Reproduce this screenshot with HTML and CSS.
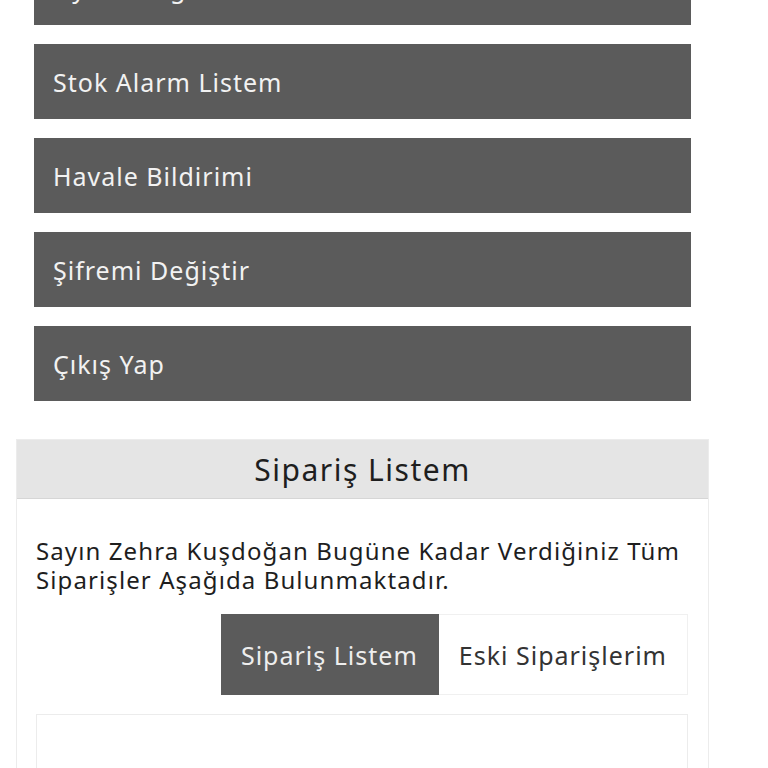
FILE: index.html
```html
<!DOCTYPE html>
<html lang="tr">
<head>
    <meta charset="UTF-8">
    <meta name="viewport" content="width=device-width, initial-scale=1.0">
    <title>Hesabım</title>
    <link rel="stylesheet" href="styles.css">
</head>
<body>
    <div class="page">
        <ul class="account-menu">
            <li><a href="#">Üyelik Bilgilerim</a></li>
            <li><a href="#">Stok Alarm Listem</a></li>
            <li><a href="#">Havale Bildirimi</a></li>
            <li><a href="#">Şifremi Değiştir</a></li>
            <li><a href="#">Çıkış Yap</a></li>
        </ul>

        <div class="orders-panel">
            <div class="orders-title">Sipariş Listem</div>
            <div class="orders-body">
                <p class="orders-info">Sayın Zehra Kuşdoğan Bugüne Kadar Verdiğiniz Tüm Siparişler Aşağıda Bulunmaktadır.</p>
                <div class="tabs">
                    <a href="#" class="tab active">Sipariş Listem</a>
                    <a href="#" class="tab">Eski Siparişlerim</a>
                </div>
                <div class="orders-list"></div>
            </div>
        </div>
    </div>
</body>
</html>
```

FILE: styles.css
```css
body {
    margin: 0;
    background: #ffffff;
    font-family: "Noto Sans", "DejaVu Sans", sans-serif;
    color: #222222;
}
.page {
    width: 693px;
    margin-left: 16px;
}
.account-menu {
    list-style: none;
    margin: -50px 18px 0 18px;
    padding: 0;
    display: flex;
    flex-direction: column;
    gap: 19px;
}
.account-menu a {
    display: flex;
    align-items: center;
    height: 75px;
    padding: 0 19px;
    background-color: #5b5b5b;
    color: #f2f2f2;
    font-size: 25px;
    letter-spacing: 1px;
    text-decoration: none;
}
.orders-panel {
    margin-top: 38px;
    border: 1px solid #ececec;
}
.orders-title {
    height: 58px;
    display: flex;
    align-items: center;
    justify-content: center;
    background-color: #e5e5e5;
    border-bottom: 1px solid #d6d6d6;
    font-size: 30px;
    letter-spacing: 1.5px;
    color: #1e1e1e;
}
.orders-body {
    padding: 37px 20px 0 19px;
}
.orders-info {
    margin: 0;
    font-size: 24px;
    letter-spacing: 1.1px;
    line-height: 29px;
    color: #1e1e1e;
}
.tabs {
    display: flex;
    justify-content: flex-end;
    margin-top: 20px;
}
.tab {
    display: flex;
    align-items: center;
    height: 79px;
    padding: 0 20px;
    font-size: 25px;
    letter-spacing: 1px;
    color: #333333;
    text-decoration: none;
    border: 1px solid #f0f0f0;
    border-left: none;
}
.tab.active {
    background-color: #5b5b5b;
    color: #eeeeee;
    border-color: #5b5b5b;
}
.orders-list {
    margin-top: 19px;
    height: 120px;
    border: 1px solid #ececec;
}
```
